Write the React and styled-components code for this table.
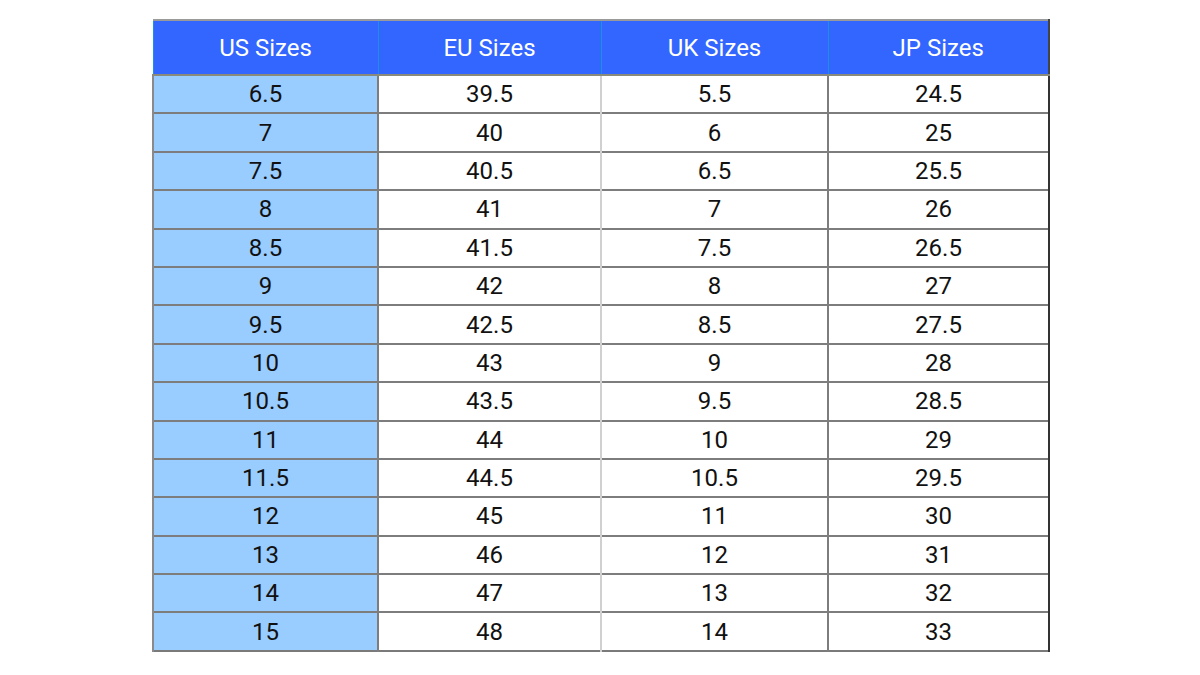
import styled, { createGlobalStyle } from "styled-components";

const GlobalStyle = createGlobalStyle`
    html, body {
        margin: 0;
        padding: 0;
        background: #fff;
        font-family: Roboto, "Liberation Sans", sans-serif;
    }
`

const rows = [
    ['6.5', '39.5', '5.5', '24.5'],
    ['7', '40', '6', '25'],
    ['7.5', '40.5', '6.5', '25.5'],
    ['8', '41', '7', '26'],
    ['8.5', '41.5', '7.5', '26.5'],
    ['9', '42', '8', '27'],
    ['9.5', '42.5', '8.5', '27.5'],
    ['10', '43', '9', '28'],
    ['10.5', '43.5', '9.5', '28.5'],
    ['11', '44', '10', '29'],
    ['11.5', '44.5', '10.5', '29.5'],
    ['12', '45', '11', '30'],
    ['13', '46', '12', '31'],
    ['14', '47', '13', '32'],
    ['15', '48', '14', '33'],
]

const heads = ['US Sizes', 'EU Sizes', 'UK Sizes', 'JP Sizes']
const widths = [225, 223, 227, 221]

export default function App() {
    return (
        <Page>
            <GlobalStyle />
            <Chart>
                <colgroup>
                    {widths.map((w, i) => <Col key={i} $w={w} />)}
                </colgroup>
                <thead>
                    <tr>
                        {heads.map(h => <HeadCell key={h}>{h}</HeadCell>)}
                    </tr>
                </thead>
                <tbody>
                    {rows.map(r => (
                        <Row key={r[0]}>
                            {r.map((v, i) => (
                                <Cell key={i} $col={i}>{v}</Cell>
                            ))}
                        </Row>
                    ))}
                </tbody>
            </Chart>
        </Page>
    )
}

const Page = styled.div`
    display: flex;
    justify-content: center;
    padding-top: 19px;
    padding-left: 2px;
`

const Chart = styled.table`
    border-collapse: collapse;
    table-layout: fixed;
    width: 896px;
    border-top: 2px solid #9a9a9a;
    border-bottom: 2px solid #7a7a7a;
`

const Col = styled.col`
    width: ${p => p.$w}px;
`

const HeadCell = styled.th`
    height: 53px;
    padding: 0;
    background: #3366ff;
    color: #fff;
    font-weight: 400;
    font-size: 24px;
    text-align: center;
    border-left: 1px solid #1e8fe0;
    border-right: 1px solid #1e8fe0;
    border-bottom: 2px solid #8a8a7a;
    &:last-child {
        border-right: 2px solid #444;
    }
`

const Row = styled.tr`
    height: 38.4px;
`

const Cell = styled.td`
    padding: 0;
    text-align: center;
    font-size: 24px;
    color: #111;
    background: ${p => p.$col === 0 ? '#99ccff' : '#fff'};
    border-top: 2px solid #7d7d7d;
    border-left: ${p => p.$col === 0 ? '2px solid #8a8a8a' : p.$col === 2 ? '2px solid #d0d0d0' : '2px solid #7d7d7d'};
    border-right: ${p => p.$col === 3 ? '2px solid #333' : 'none'};
`
